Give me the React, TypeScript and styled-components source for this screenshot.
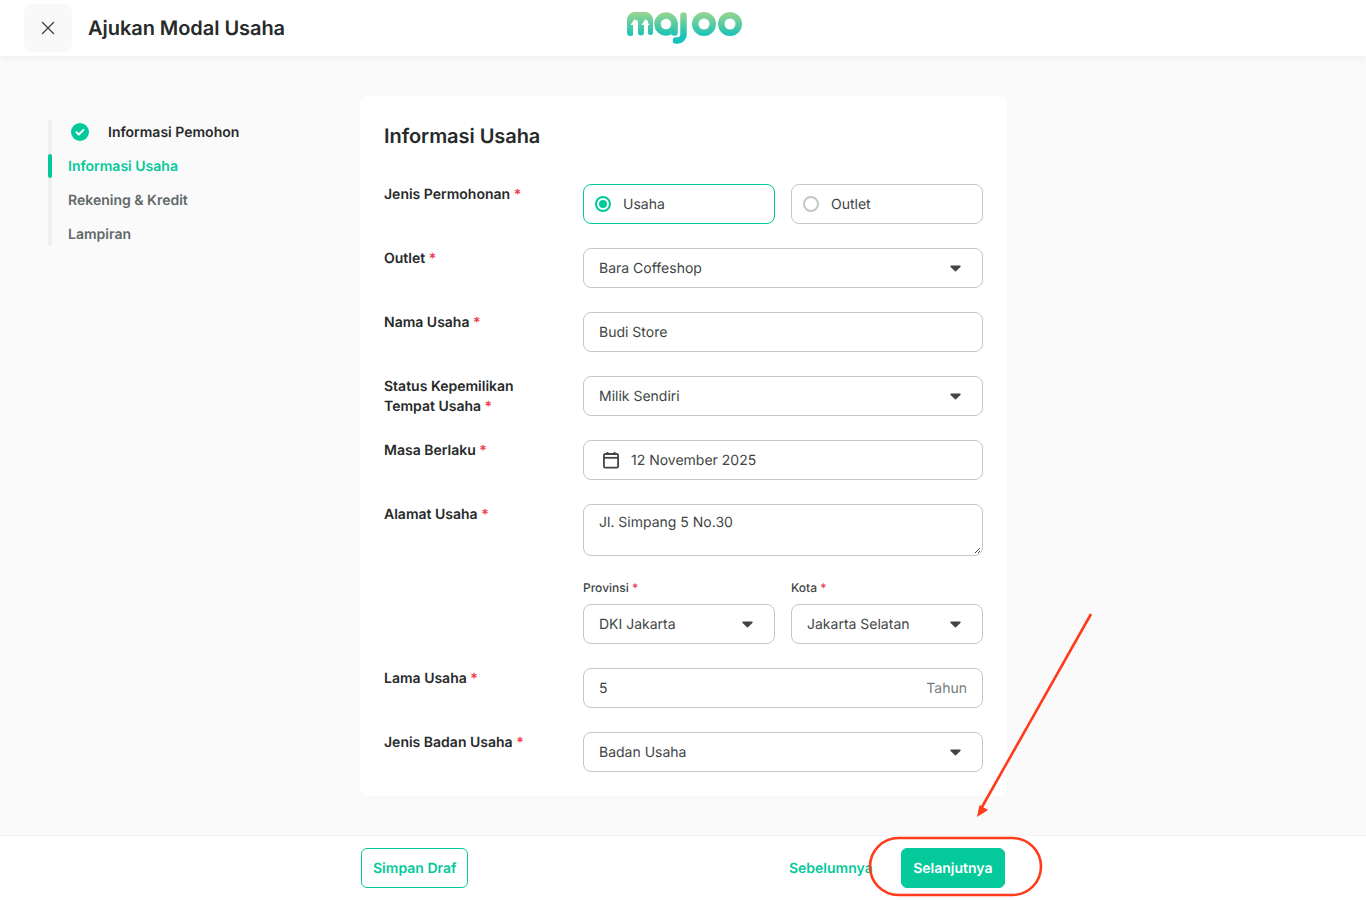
import { createGlobalStyle, styled } from "styled-components";

const GlobalStyle = createGlobalStyle`
  html, body {
    margin: 0;
    padding: 0;
    height: 100%;
    overflow: hidden;
    background: #fafafa;
    font-family: Inter, "Liberation Sans", sans-serif;
    color: #404545;
    text-rendering: geometricPrecision;
  }
  * {
    box-sizing: border-box;
  }
`;

const Page = styled.div`
  position: relative;
  display: flex;
  flex-direction: column;
  height: 900px;
`;

const Header = styled.header`
  position: relative;
  display: flex;
  align-items: center;
  flex: 0 0 56px;
  padding: 0 0 0 24px;
  background: #fff;
  box-shadow: 0 2px 8px rgba(0, 0, 0, 0.05);
`;

const CloseButton = styled.button`
  display: flex;
  align-items: center;
  justify-content: center;
  width: 48px;
  height: 48px;
  margin-right: 16px;
  padding: 0;
  border: 0;
  border-radius: 8px;
  background: #f9f9f9;
  color: #404545;
`;

const PageTitle = styled.h1`
  margin: 0;
  font-size: 20px;
  line-height: 28px;
  font-weight: 600;
  letter-spacing: -0.05px;
  color: #272a2a;
`;

const LogoSlot = styled.div`
  position: absolute;
  left: 626px;
  top: 10px;
  width: 118px;
  height: 36px;
`;

const Main = styled.main`
  flex: 1;
  display: grid;
  grid-template-columns: 360px 647px;
  align-content: start;
  padding-top: 40px;
`;

const Steps = styled.nav`
  display: flex;
  flex-direction: column;
  gap: 10px;
  align-self: start;
  margin: 24px 0 0 48px;
  border-left: 4px solid #eef0f0;
  border-radius: 2px;
`;

const Step = styled.div<{ $active?: boolean; $done?: boolean }>`
  position: relative;
  display: flex;
  align-items: center;
  gap: 19px;
  height: 24px;
  padding-left: ${(p) => (p.$done ? "19px" : "16px")};
  font-size: 14px;
  font-weight: 600;
  color: ${(p) => (p.$active ? "#04c99b" : p.$done ? "#272a2a" : "#616969")};

  ${(p) =>
    p.$active &&
    `&::before {
      content: "";
      position: absolute;
      left: -4px;
      top: 0;
      width: 4px;
      height: 24px;
      border-radius: 2px;
      background: #04c99b;
    }`}
`;

const Card = styled.section`
  display: flex;
  flex-direction: column;
  gap: 24px;
  height: 700px;
  padding: 24px;
  border-radius: 8px;
  background: #fff;
  box-shadow: 0 0 2px rgba(0, 0, 0, 0.03);
`;

const CardTitle = styled.h2`
  margin: 0 0 8px;
  font-size: 20px;
  line-height: 32px;
  font-weight: 600;
  letter-spacing: -0.05px;
  color: #272a2a;
`;

const Row = styled.div`
  display: grid;
  grid-template-columns: 199px 400px;
`;

const Label = styled.label`
  padding-top: 1px;
  margin-bottom: -1px;
  font-size: 14px;
  line-height: 20px;
  font-weight: 600;
  color: #272a2a;
`;

const Required = styled.span`
  color: #ef3d4e;
`;

const Pair = styled.div`
  display: grid;
  grid-template-columns: 192px 192px;
  column-gap: 16px;
`;

const Box = styled.div<{ $selected?: boolean }>`
  display: flex;
  align-items: center;
  height: 40px;
  padding: 0 15px;
  border: 1px solid ${(p) => (p.$selected ? "#04c99b" : "#c4c7c7")};
  border-radius: 8px;
  background: #fff;
  font-size: 14px;
  color: #404545;
`;

const RadioBox = styled(Box)`
  gap: 12px;
  padding: 0 11px;
`;

const Radio = styled.span<{ $on?: boolean }>`
  display: flex;
  align-items: center;
  justify-content: center;
  width: 16px;
  height: 16px;
  border-radius: 50%;
  border: 2px solid ${(p) => (p.$on ? "#04c99b" : "#c4c7c7")};

  &::after {
    content: "";
    width: 8px;
    height: 8px;
    border-radius: 50%;
    background: ${(p) => (p.$on ? "#04c99b" : "transparent")};
  }
`;

const Value = styled.span`
  flex: 1;
`;

const Suffix = styled.span`
  color: #767d7d;
`;

const Caret = styled.svg`
  margin-right: 6px;
`;

const DateBox = styled(Box)`
  gap: 11px;
  padding-left: 18px;
`;

const TextArea = styled(Box)`
  position: relative;
  align-items: flex-start;
  height: 52px;
  padding-top: 8px;
  line-height: 20px;
`;

const Grip = styled.svg`
  position: absolute;
  right: 1px;
  bottom: 1px;
`;

const SmallField = styled.div`
  display: flex;
  flex-direction: column;
  gap: 8px;
`;

const SmallLabel = styled.label`
  font-size: 12px;
  line-height: 16px;
  font-weight: 500;
  color: #404545;
`;

const AddressGroup = styled.div`
  display: flex;
  flex-direction: column;
  gap: 24px;
`;

const Footer = styled.footer`
  flex: 0 0 65px;
  display: flex;
  align-items: flex-start;
  justify-content: space-between;
  padding: 12px 361px 0 361px;
  border-top: 1px solid #f1f2f2;
  background: #fff;
`;

const FooterActions = styled.div`
  display: flex;
  gap: 16px;
`;

const Action = styled.button<{ $variant: "outline" | "ghost" | "solid" }>`
  height: 40px;
  padding: 0 ${(p) => (p.$variant === "solid" ? "11.5px" : "11px")};
  border-radius: 6px;
  border: 1px solid ${(p) => (p.$variant === "ghost" ? "transparent" : "#04c99b")};
  background: ${(p) => (p.$variant === "solid" ? "#04c99b" : "#fff")};
  color: ${(p) => (p.$variant === "solid" ? "#fff" : "#04c99b")};
  font-family: inherit;
  font-size: 14px;
  font-weight: 600;
  text-rendering: geometricPrecision;
`;

const Annotation = styled.svg`
  position: absolute;
  inset: 0;
  pointer-events: none;
`;

const req = <Required> *</Required>;

const Logo = () => (
  <svg width="118" height="36" viewBox="0 0 118 36" fill="none">
    <defs>
      <linearGradient id="logoGrad" x1="0" y1="2" x2="0" y2="26" gradientUnits="userSpaceOnUse">
        <stop offset="0" stopColor="#9bd68c" />
        <stop offset="1" stopColor="#17c2b9" />
      </linearGradient>
    </defs>
    <path
      d="M1 10a8 8 0 0 1 8-8h10a8 8 0 0 1 8 8v12.500a2.500 2.500 0 0 1-5 0V12a2 2 0 0 0-4 0v10.500a3 3 0 0 1-6 0V12a2 2 0 0 0-4 0v10.500a3.500 3.500 0 0 1-7 0z"
      fill="url(#logoGrad)"
    />
    <g fill="#fff">
      <path d="M7 26V15H4.500L8.500 9l4 6H10v11z" />
      <path d="M18 26V15h-2.500L19.500 9l4 6H21v11z" />
    </g>
    <g stroke="url(#logoGrad)" strokeWidth="6.500" strokeLinecap="round" strokeLinejoin="round">
      <circle cx="40" cy="14" r="8.500" />
      <path d="M48.500 14v8.500" />
      <path d="M57.500 5.500v19a6 6 0 0 1-6 6h-1.500" />
      <circle cx="78" cy="14" r="8.750" />
      <circle cx="104" cy="14" r="8.750" />
    </g>
  </svg>
);

const Dropdown = ({ value }: { value: string }) => (
  <Box>
    <Value>{value}</Value>
    <Caret width="11" height="7" viewBox="0 0 11 7">
      <path d="M1 .5h9a.8.8 0 0 1 .6 1.300L6 6.200a.7.7 0 0 1-1 0L.4 1.800A.8.8 0 0 1 1 .5z" fill="#404545" />
    </Caret>
  </Box>
);

export default function App() {
  return (
    <Page>
      <GlobalStyle />
      <Header>
        <CloseButton aria-label="Tutup">
          <svg width="16" height="16" viewBox="0 0 16 16" fill="none" stroke="currentColor" strokeWidth="1.400" strokeLinecap="round">
            <path d="M2.500 2.500l11 11M13.500 2.500l-11 11" />
          </svg>
        </CloseButton>
        <PageTitle>Ajukan Modal Usaha</PageTitle>
        <LogoSlot>
          <Logo />
        </LogoSlot>
      </Header>

      <Main>
        <Steps>
          <Step $done>
            <svg width="18" height="18" viewBox="0 0 18 18">
              <circle cx="9" cy="9" r="9" fill="#04c99b" />
              <path d="M5.500 9.200l2.400 2.300 4.600-4.600" fill="none" stroke="#fff" strokeWidth="2" strokeLinecap="round" strokeLinejoin="round" />
            </svg>
            Informasi Pemohon
          </Step>
          <Step $active>Informasi Usaha</Step>
          <Step>Rekening &amp; Kredit</Step>
          <Step>Lampiran</Step>
        </Steps>

        <Card>
          <CardTitle>Informasi Usaha</CardTitle>

          <Row>
            <Label>Jenis Permohonan{req}</Label>
            <Pair>
              <RadioBox $selected>
                <Radio $on />
                Usaha
              </RadioBox>
              <RadioBox>
                <Radio />
                Outlet
              </RadioBox>
            </Pair>
          </Row>

          <Row>
            <Label>Outlet{req}</Label>
            <Dropdown value="Bara Coffeshop" />
          </Row>

          <Row>
            <Label>Nama Usaha{req}</Label>
            <Box>Budi Store</Box>
          </Row>

          <Row>
            <Label>
              Status Kepemilikan
              <br />
              Tempat Usaha{req}
            </Label>
            <Dropdown value="Milik Sendiri" />
          </Row>

          <Row>
            <Label>Masa Berlaku{req}</Label>
            <DateBox>
              <svg width="18" height="18" viewBox="0 0 18 18" fill="none" stroke="#404545" strokeWidth="1.800">
                <rect x="1.900" y="3" width="14.200" height="13.600" rx="1.400" />
                <path d="M2 6.800h14" />
                <path d="M5.500 1v3M12.500 1v3" />
              </svg>
              12 November 2025
            </DateBox>
          </Row>

          <Row>
            <Label>Alamat Usaha{req}</Label>
            <AddressGroup>
              <TextArea>
                Jl. Simpang 5 No.30
                <Grip width="8" height="8" viewBox="0 0 8 8" stroke="#404545" strokeWidth="1">
                  <path d="M2 7l5-5M5 7l2-2" />
                </Grip>
              </TextArea>
              <Pair>
                <SmallField>
                  <SmallLabel>Provinsi{req}</SmallLabel>
                  <Dropdown value="DKI Jakarta" />
                </SmallField>
                <SmallField>
                  <SmallLabel>Kota{req}</SmallLabel>
                  <Dropdown value="Jakarta Selatan" />
                </SmallField>
              </Pair>
            </AddressGroup>
          </Row>

          <Row>
            <Label>Lama Usaha{req}</Label>
            <Box>
              <Value>5</Value>
              <Suffix>Tahun</Suffix>
            </Box>
          </Row>

          <Row>
            <Label>Jenis Badan Usaha{req}</Label>
            <Dropdown value="Badan Usaha" />
          </Row>
        </Card>
      </Main>

      <Footer>
        <Action $variant="outline">Simpan Draf</Action>
        <FooterActions>
          <Action $variant="ghost">Sebelumnya</Action>
          <Action $variant="solid">Selanjutnya</Action>
        </FooterActions>
      </Footer>

      <Annotation width="1366" height="900" viewBox="0 0 1366 900" fill="none">
        <path d="M1091 614L982 807" stroke="#ff3b1a" strokeWidth="2.600" />
        <path d="M977 817l2.500-12 8.500 5z" fill="#ff3b1a" />
        <rect x="870" y="838" width="171" height="57" rx="28.500" stroke="#ff3b1a" strokeWidth="2.600" />
      </Annotation>
    </Page>
  );
}
